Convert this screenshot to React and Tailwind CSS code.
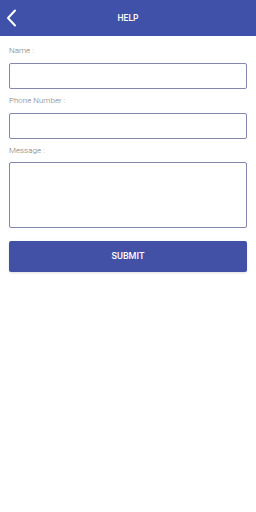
import { useState } from 'react'

export default function App() {
  const [name, setName] = useState('')
  const [phone, setPhone] = useState('')
  const [message, setMessage] = useState('')

  return (
    <div className="w-[256px] h-[512px] bg-white" style={{ fontFamily: 'Roboto, "Liberation Sans", sans-serif' }}>
      {/* Header */}
      <div className="relative h-[36px] bg-[#3f51a8] flex items-center justify-center">
        <button className="absolute left-[5px] top-[9px] text-white">
          <svg width="12" height="18" viewBox="0 0 12 18" fill="none">
            <path d="M10 1.5 L3 9 L10 16.5" stroke="white" strokeWidth="2" strokeLinecap="round" strokeLinejoin="round" />
          </svg>
        </button>
        <h1 className="text-white text-[8.5px] font-medium">HELP</h1>
      </div>

      {/* Form */}
      <div className="px-[9px] pt-[9px]">
        <label className="block text-[8px] font-light text-[#7a7a7a] h-[12px] leading-[12px]">Name :</label>
        <input
          value={name}
          onChange={(e) => setName(e.target.value)}
          className="mt-[6px] block w-full h-[26px] border border-[#8288ac] rounded-[2px] outline-none"
        />

        <label className="block text-[8px] font-light text-[#7a7a7a] h-[12px] leading-[12px] mt-[6px]">Phone Number :</label>
        <input
          value={phone}
          onChange={(e) => setPhone(e.target.value)}
          className="mt-[6px] block w-full h-[26px] border border-[#8288ac] rounded-[2px] outline-none"
        />

        <label className="block text-[8px] font-light text-[#7a7a7a] h-[12px] leading-[12px] mt-[6px]">Message :</label>
        <textarea
          value={message}
          onChange={(e) => setMessage(e.target.value)}
          className="mt-[5px] block w-full h-[66px] border border-[#8288ac] rounded-[2px] outline-none resize-none"
        />

        <button className="mt-[13px] w-full h-[31px] bg-[#4251a6] rounded-[2px] text-white text-[9px] font-medium shadow-sm">
          SUBMIT
        </button>
      </div>
    </div>
  )
}
